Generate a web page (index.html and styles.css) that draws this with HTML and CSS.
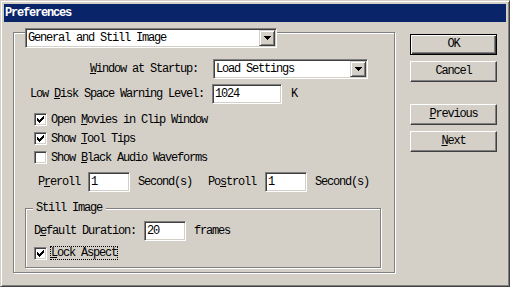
FILE: index.html
```html
<!DOCTYPE html>
<html lang="en">
<head>
  <meta charset="UTF-8">
  <meta name="viewport" content="width=device-width, initial-scale=1.0">
  <title>Preferences</title>
  <link rel="stylesheet" href="styles.css">
</head>
<body>
  <div class="window">
    <div class="titlebar">Preferences</div>

    <div class="main">
      <div class="panel">
        <div class="combo combo-page">
          <span class="combo-text">General and Still Image</span>
          <span class="combo-btn"><svg width="7" height="4" viewBox="0 0 7 4"><path d="M0 0H7V1H6V2H5V3H4V4H3V3H2V2H1V1H0Z" fill="#000"/></svg></span>
        </div>

        <div class="row row-startup">
          <span class="label"><u>W</u>indow at Startup:</span>
          <div class="combo combo-startup">
            <span class="combo-text">Load Settings</span>
            <span class="combo-btn"><svg width="7" height="4" viewBox="0 0 7 4"><path d="M0 0H7V1H6V2H5V3H4V4H3V3H2V2H1V1H0Z" fill="#000"/></svg></span>
          </div>
        </div>

        <div class="row row-disk">
          <span class="label">Low <u>D</u>isk Space Warning Level:</span>
          <div class="field field-disk">1024</div>
          <span class="unit">K</span>
        </div>

        <div class="checks">
          <div class="check-row">
            <span class="check"><svg width="11" height="11" viewBox="0 0 11 11"><path d="M2 4V7H3V8H4V9H5V8H6V7H7V6H8V5H9V2H8V3H7V4H6V5H5V6H4V5H3V4Z" fill="#000"/></svg></span>
            <span class="check-label">Open <u>M</u>ovies in Clip Window</span>
          </div>
          <div class="check-row">
            <span class="check"><svg width="11" height="11" viewBox="0 0 11 11"><path d="M2 4V7H3V8H4V9H5V8H6V7H7V6H8V5H9V2H8V3H7V4H6V5H5V6H4V5H3V4Z" fill="#000"/></svg></span>
            <span class="check-label">Show <u>T</u>ool Tips</span>
          </div>
          <div class="check-row">
            <span class="check"></span>
            <span class="check-label">Show <u>B</u>lack Audio Waveforms</span>
          </div>
        </div>

        <div class="row row-roll">
          <span class="label">P<u>r</u>eroll</span>
          <div class="field field-small">1</div>
          <span class="unit">Second(s)</span>
          <span class="label label-post">Po<u>s</u>troll</span>
          <div class="field field-small">1</div>
          <span class="unit">Second(s)</span>
        </div>

        <div class="group">
          <span class="legend">Still Image</span>
          <div class="row row-duration">
            <span class="label">D<u>e</u>fault Duration:</span>
            <div class="field field-small">20</div>
            <span class="unit">frames</span>
          </div>
          <div class="check-row row-lock">
            <span class="check"><svg width="11" height="11" viewBox="0 0 11 11"><path d="M2 4V7H3V8H4V9H5V8H6V7H7V6H8V5H9V2H8V3H7V4H6V5H5V6H4V5H3V4Z" fill="#000"/></svg></span>
            <span class="check-label focused"><u>L</u>ock Aspect</span>
          </div>
        </div>
      </div>

      <div class="buttons">
        <div class="btn default">OK</div>
        <div class="btn">Cancel</div>
        <div class="btn btn-prev"><u>P</u>revious</div>
        <div class="btn"><u>N</u>ext</div>
      </div>
    </div>
  </div>
</body>
</html>
```

FILE: styles.css
```css
* {
  box-sizing: border-box;
}
body {
  margin: 0;
  background: #d4d0c8;
  font-family: "Liberation Mono", "DejaVu Sans Mono", monospace;
  font-size: 12px;
  letter-spacing: -1.2px;
  line-height: 14px;
  color: #000;
}
u {
  text-underline-offset: 1px;
}
.window {
  width: 510px;
  height: 287px;
  border: 1px solid;
  border-color: #d4d0c8 #404040 #404040 #d4d0c8;
  box-shadow: inset 1px 1px #fff, inset -1px -1px #808080;
  padding: 3px;
}
.titlebar {
  height: 18px;
  background: #0a246a;
  color: #fff;
  font-weight: bold;
  line-height: 18px;
  padding-left: 1px;
}
.main {
  display: flex;
  align-items: flex-start;
  padding: 10px 0 0 9px;
}

/* left property page */
.panel {
  width: 382px;
  height: 241px;
  border: 1px solid #808080;
  box-shadow: inset 1px 1px #fff, 1px 1px #fff;
}
.combo {
  display: flex;
  height: 20px;
  background: #fff;
  border: 1px solid;
  border-color: #808080 #fff #fff #808080;
  box-shadow: inset 1px 1px #404040, inset -1px -1px #d4d0c8;
  padding: 1px;
}
.combo-text {
  flex: 1;
  padding-left: 1px;
  line-height: 16px;
}
.combo-btn {
  width: 16px;
  display: flex;
  align-items: center;
  justify-content: center;
  background: #d4d0c8;
  border: 1px solid;
  border-color: #d4d0c8 #404040 #404040 #d4d0c8;
  box-shadow: inset 1px 1px #fff, inset -1px -1px #808080;
}
.combo-btn svg {
  display: block;
}
.combo-page {
  width: 252px;
  margin: -5px 0 0 11px;
}
.combo-startup {
  width: 155px;
  margin-left: 15px;
}
.field {
  height: 20px;
  background: #fff;
  border: 1px solid;
  border-color: #808080 #fff #fff #808080;
  box-shadow: inset 1px 1px #404040, inset -1px -1px #d4d0c8;
  padding: 1px 2px;
  line-height: 16px;
}
.field-disk {
  width: 70px;
  margin-left: 8px;
}
.field-small {
  width: 42px;
  margin-left: 8px;
}
.row {
  display: flex;
  align-items: center;
  height: 20px;
}
.unit {
  margin-left: 8px;
}
.row-startup {
  margin-top: 11px;
}
.row-startup .label {
  margin-left: 76px;
}
.row-disk {
  margin-top: 5px;
}
.row-disk .label {
  margin-left: 16px;
}
.row-disk .unit {
  margin-left: 9px;
}
.checks {
  margin-top: 6px;
}
.check-row {
  display: flex;
  align-items: center;
  height: 19px;
  margin-left: 20px;
}
.check {
  flex: none;
  width: 13px;
  height: 13px;
  background: #fff;
  border: 1px solid;
  border-color: #808080 #fff #fff #808080;
  box-shadow: inset 1px 1px #404040, inset -1px -1px #d4d0c8;
}
.check svg {
  display: block;
}
.check-label {
  margin-left: 4px;
}
.row-roll {
  margin-top: 5px;
}
.row-roll .label {
  margin-left: 24px;
}
.row-roll .label-post {
  margin-left: 16px;
}
.row-roll .label-post + .field {
  margin-left: 9px;
}

/* still image group */
.group {
  width: 356px;
  height: 60px;
  margin: 16px 0 0 11px;
  border: 1px solid #808080;
  box-shadow: inset 1px 1px #fff, 1px 1px #fff;
}
.legend {
  display: block;
  width: fit-content;
  margin: -8px 0 0 7px;
  padding: 0 4px 0 3px;
  background: #d4d0c8;
}
.row-duration {
  margin-top: 6px;
}
.row-duration .label {
  margin-left: 8px;
}
.row-lock {
  align-items: flex-start;
  height: 14px;
  margin: 5px 0 0 8px;
}
.row-lock .check {
  margin-top: 1px;
}
.focused {
  margin-left: 3px;
  border: 1px dotted #000;
  line-height: 12px;
}

/* right buttons */
.buttons {
  display: flex;
  flex-direction: column;
  gap: 6px;
  margin: 2px 0 0 15px;
}
.btn {
  width: 87px;
  height: 21px;
  border: 1px solid;
  border-color: #fff #404040 #404040 #fff;
  box-shadow: inset -1px -1px #808080;
  text-align: center;
  line-height: 19px;
}
.btn.default {
  border-color: #000;
  box-shadow: inset 1px 1px #fff, inset -1px -1px #404040, inset -2px -2px #808080;
}
.btn-prev {
  margin-top: 16px;
}
```
